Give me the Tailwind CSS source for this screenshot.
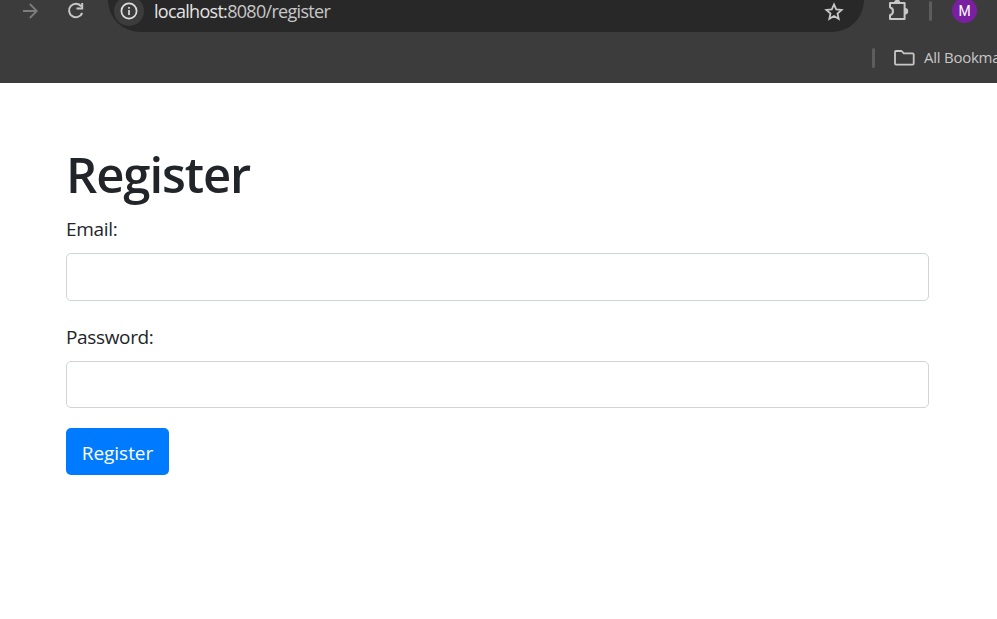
<!DOCTYPE html>
<html lang="en">
<head>
<meta charset="utf-8">
<title>Register</title>
<script src="https://cdn.jsdelivr.net/npm/@tailwindcss/browser@4"></script>
</head>
<body class="w-[997px] h-[619px] overflow-hidden bg-white font-['Segoe_UI','Open_Sans',sans-serif] text-[#212529]">
<header class="h-[83px] bg-[#3c3c3c] overflow-hidden text-[#c7c7c7]">
  <div class="flex h-8 items-start">
    <svg class="ml-[22px] mt-[2px] w-4 h-[18px] shrink-0" viewBox="0 0 16 18" fill="none" stroke="#7d7d7d" stroke-width="1.8"><path d="M1 9H14.5M7.8 2l7 7-7 7"/></svg>
    <svg class="ml-[29px] mt-[2px] w-[18px] h-[18px] shrink-0" viewBox="0 0 18 18" fill="none" stroke="#c7c7c7" stroke-width="2"><path d="M14.3 4.3A6.8 6.8 0 1 0 15.2 11M15.2 1V6.5H9.5"/></svg>
    <div class="ml-[23px] w-[756px] h-8 shrink-0 flex items-start bg-[#282828] rounded-b-[32px]">
      <span class="ml-[6px] -mt-1 size-[30px] rounded-full bg-[#3c3c3c] flex items-center justify-center">
        <svg class="size-[18px]" viewBox="0 0 18 18" fill="none" stroke="#dedede" stroke-width="1.7"><circle cx="9" cy="9" r="7.6"/><path d="M9 8v5M9 5v1.8"/></svg>
      </span>
      <span class="ml-[10px] w-[180px] text-[18px] leading-[23px] tracking-[-0.7px] whitespace-nowrap"><span class="text-[#e3e3e3]">localhost:</span>8080/register</span>
      <svg class="ml-[490px] mt-[2px] w-5 h-[19px] shrink-0" viewBox="0 0 20 19" fill="none" stroke="#c7c7c7" stroke-width="1.8"><path d="M10 2.4l2.2 5 5.4.5-4.1 3.6 1.2 5.3-4.7-2.8-4.7 2.8 1.2-5.3L2.4 7.9l5.4-.5z"/></svg>
    </div>
    <svg class="ml-[23px] w-[23px] h-[21px] shrink-0" viewBox="0 0 23 21"><path d="M3 3H17.6V19H3V15.2Q6 14.2 6 11.2T3 7.2Z" fill="none" stroke="#c7c7c7" stroke-width="2" stroke-linejoin="round"/><path d="M7 3a3.2 3.2 0 0 1 6.4 0zM18 8a3.2 3.2 0 0 1 0 6.4z" fill="#c7c7c7"/></svg>
    <span class="ml-[19px] mt-px w-[3px] h-5 shrink-0 rounded bg-[#5d5d5d]"></span>
    <span class="ml-[20px] -mt-[2px] size-[25px] shrink-0 rounded-full bg-[#7b1fa2] text-white text-[14px] font-normal font-['Roboto',sans-serif] flex items-center justify-center pt-px">M</span>
  </div>
  <div class="flex h-[51px] items-center pl-[872px]">
    <span class="w-[3px] h-5 shrink-0 rounded bg-[#5d5d5d]"></span>
    <svg class="ml-[19px] w-[21px] h-[16px] shrink-0" viewBox="0 0 21 16" fill="none" stroke="#c7c7c7" stroke-width="1.8" stroke-linejoin="round"><path d="M1.9 1H7.6L9.8 3.3H18.6Q19.7 3.3 19.7 4.4V13.6Q19.7 14.7 18.6 14.7H2Q1 14.7 1 13.6V2Q1 1 1.9 1z"/></svg>
    <span class="ml-[9px] text-[15px] tracking-[-0.25px] whitespace-nowrap">All Bookmarks</span>
  </div>
</header>
<main class="w-[863px] ml-[66px] pt-[61px]">
  <h1 class="text-[49px] leading-[60px] font-semibold tracking-[-1.1px]">Register</h1>
  <form class="text-[19px] leading-[30px]">
    <label class="block mt-[10px] tracking-[-0.3px]" for="email">Email:</label>
    <input id="email" type="email" class="block mt-[9px] w-full h-12 rounded-[5px] border border-[#ced4da] bg-white px-4">
    <label class="block mt-[21px] tracking-[-0.35px]" for="password">Password:</label>
    <input id="password" type="password" class="block mt-[9px] w-full h-[47px] rounded-[5px] border border-[#ced4da] bg-white px-4">
    <button type="button" class="block mt-5 w-[103px] h-[47px] rounded-[5px] bg-[#007bff] text-white tracking-[-0.05px] pt-[2px]">Register</button>
  </form>
</main>
</body>
</html>
